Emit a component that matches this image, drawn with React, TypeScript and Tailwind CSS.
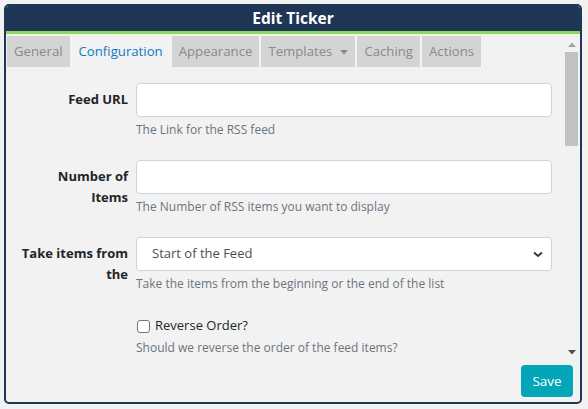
import React from "react";

const font = { fontFamily: '"Open Sans", "Noto Sans", sans-serif' };

function Tab({ label, active, caret }: { label: string; active?: boolean; caret?: boolean }) {
  return (
    <div
      className={
        "h-[31px] flex items-center px-[7px] pt-[1px] text-[13.2px] " +
        (active ? "bg-[#f2f2f2] text-[#0d7ac0]" : "bg-[#d4d4d4] text-[#8a8a8a]")
      }
    >
      {label}
      {caret && (
        <svg width="8" height="5" viewBox="0 0 8 5" className="ml-[8px]">
          <path d="M0 0 L8 0 L4 4.5 Z" fill="#8a8a8a" />
        </svg>
      )}
    </div>
  );
}

function Row({ label, help, children }: { label: React.ReactNode; help: string; children: React.ReactNode }) {
  return (
    <div className="flex mb-[21px]">
      <div className="w-[122px] shrink-0 text-right font-bold text-[13px] leading-[21px] text-[#212529] pt-[6px] whitespace-nowrap">
        {label}
      </div>
      <div className="flex-1 ml-[8px] mr-[11px]">
        {children}
        <div className="mt-[4px] text-[12px] leading-[18px] text-[#6c757d]">{help}</div>
      </div>
    </div>
  );
}

export default function App() {
  return (
    <div className="min-h-screen bg-[#f2f2f2] p-[4px]" style={font}>
      <div className="w-[578px] h-[400px] rounded-[5px] border-2 border-[#1f3657] bg-[#f2f2f2] flex flex-col overflow-hidden">
        <div className="h-[25px] bg-[#1f3657] text-white font-bold text-[15.5px] flex items-center justify-center">
          Edit Ticker
        </div>
        <div className="h-[3px] bg-[#8cd762]" />
        <div className="flex h-[326px]">
          <div className="flex-1 overflow-hidden">
            <div className="flex gap-[2px] pt-[2px] pl-[1px]">
              <Tab label="General" />
              <Tab label="Configuration" active />
              <Tab label="Appearance" />
              <Tab label="Templates" caret />
              <Tab label="Caching" />
              <Tab label="Actions" />
            </div>
            <div className="pt-[16px]">
              <Row label="Feed URL" help="The Link for the RSS feed">
                <div className="h-[34px] bg-white border border-[#ced4da] rounded-[4px]" />
              </Row>
              <Row
                label={
                  <>
                    Number of
                    <br />
                    Items
                  </>
                }
                help="The Number of RSS items you want to display"
              >
                <div className="h-[34px] bg-white border border-[#ced4da] rounded-[4px]" />
              </Row>
              <Row
                label={
                  <>
                    Take items from
                    <br />
                    the
                  </>
                }
                help="Take the items from the beginning or the end of the list"
              >
                <div className="h-[34px] bg-white border border-[#ced4da] rounded-[4px] flex items-center justify-between pl-[15px] pr-[8px] text-[13px] text-[#495057]">
                  <span>Start of the Feed</span>
                  <svg width="10" height="7" viewBox="0 0 10 7">
                    <path d="M1 1.5 L5 5 L9 1.5" fill="none" stroke="#343a40" strokeWidth="2" />
                  </svg>
                </div>
              </Row>
              <div className="flex">
                <div className="w-[122px] shrink-0" />
                <div className="flex-1 ml-[8px] mr-[11px]">
                  <div className="h-[24px] flex items-center">
                    <div className="w-[13px] h-[13px] border border-[#767676] rounded-[3px] bg-white ml-[1px]" />
                    <span className="ml-[5px] text-[13px] text-[#212529]">Reverse Order?</span>
                  </div>
                  <div className="mt-[1px] text-[12px] leading-[18px] text-[#6c757d]">
                    Should we reverse the order of the feed items?
                  </div>
                </div>
              </div>
            </div>
          </div>
          <div className="w-[17px] shrink-0 flex flex-col pt-[2px]">
            <div className="h-[16px] flex items-center justify-center">
              <svg width="8" height="5" viewBox="0 0 8 5">
                <path d="M0 5 L8 5 L4 0.5 Z" fill="#a3a3a3" />
              </svg>
            </div>
            <div className="h-[94px] mx-[2px] bg-[#c1c1c1]" />
            <div className="flex-1" />
            <div className="h-[16px] flex items-center justify-center">
              <svg width="8" height="5" viewBox="0 0 8 5">
                <path d="M0 0 L8 0 L4 4.5 Z" fill="#505050" />
              </svg>
            </div>
          </div>
        </div>
        <div className="flex-1 flex justify-end items-start pt-[5px] pr-[7px]">
          <button className="h-[32px] w-[52px] rounded-[4px] bg-[#03a5b8] text-white text-[13.5px]">Save</button>
        </div>
      </div>
    </div>
  );
}
